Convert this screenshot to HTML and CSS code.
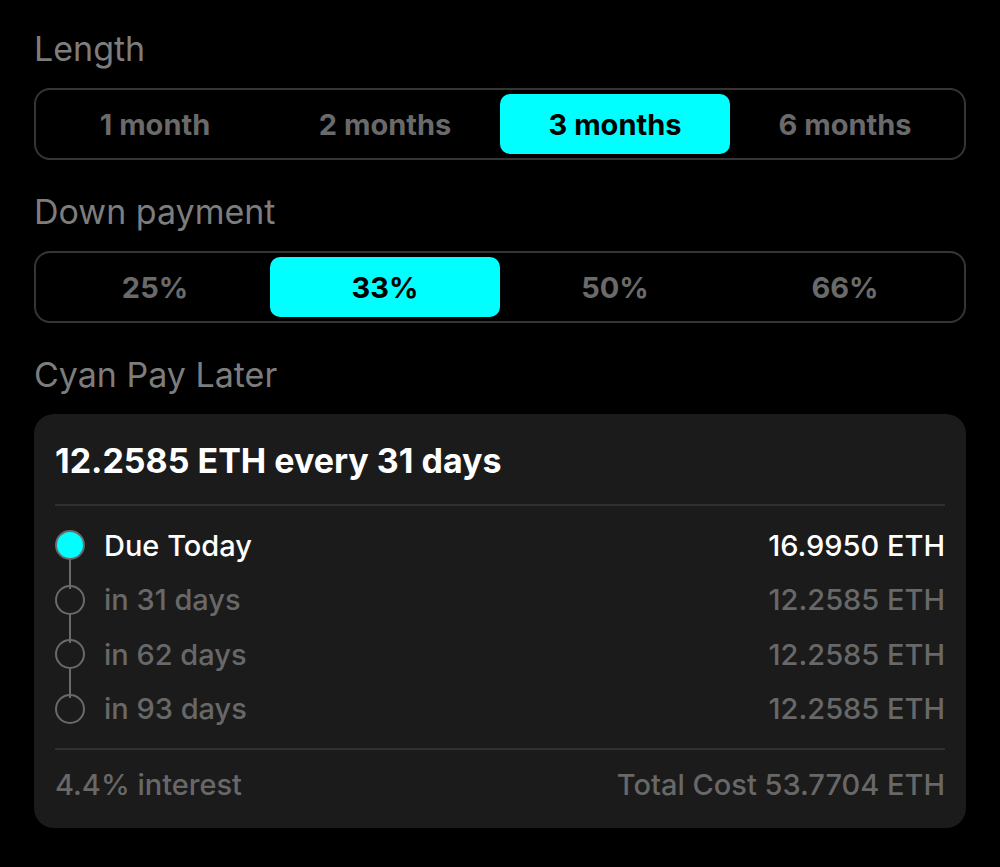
FILE: index.html
```html
<!DOCTYPE html>
<html>
<head>
<meta charset="utf-8">
<link rel="stylesheet" href="styles.css">
</head>
<body>
<div class="panel">
  <div class="label">Length</div>
  <div class="seg">
    <div class="opt">1 month</div>
    <div class="opt">2 months</div>
    <div class="opt active">3 months</div>
    <div class="opt">6 months</div>
  </div>
  <div class="label spaced">Down payment</div>
  <div class="seg">
    <div class="opt">25%</div>
    <div class="opt active">33%</div>
    <div class="opt">50%</div>
    <div class="opt">66%</div>
  </div>
  <div class="label spaced">Cyan Pay Later</div>
  <div class="card">
    <div class="title">12.2585 ETH every 31 days</div>
    <div class="rule"></div>
    <div class="rows">
      <div class="row current">
        <div class="marker"><span class="dot"></span></div>
        <div class="when">Due Today</div>
        <div class="amt">16.9950 ETH</div>
      </div>
      <div class="row">
        <div class="marker"><span class="dot"></span></div>
        <div class="when">in 31 days</div>
        <div class="amt">12.2585 ETH</div>
      </div>
      <div class="row">
        <div class="marker"><span class="dot"></span></div>
        <div class="when">in 62 days</div>
        <div class="amt">12.2585 ETH</div>
      </div>
      <div class="row last">
        <div class="marker"><span class="dot"></span></div>
        <div class="when">in 93 days</div>
        <div class="amt">12.2585 ETH</div>
      </div>
    </div>
    <div class="rule rule2"></div>
    <div class="foot">
      <div>4.4% interest</div>
      <div>Total Cost 53.7704 ETH</div>
    </div>
  </div>
</div>
</body>
</html>
```
FILE: styles.css
```css
* { box-sizing: border-box; }
html, body {
  margin: 0;
  background: #000;
}
body {
  font-family: Inter, "Noto Sans", "Liberation Sans", sans-serif;
  color: #fff;
}
.panel {
  width: 932px;
  margin-left: 34px;
  padding-top: 29px;
}
.label {
  font-size: 34px;
  line-height: 40px;
  font-weight: 400;
  color: #7d7d7d;
  margin-bottom: 19px;
}
.label.spaced { margin-top: 32px; }
.seg {
  display: grid;
  grid-template-columns: repeat(4, 1fr);
  border: 2px solid #353535;
  border-radius: 16px;
  padding: 4px;
  height: 72px;
}
.opt {
  display: flex;
  align-items: center;
  justify-content: center;
  font-size: 29px;
  font-weight: 700;
  color: #6a6a6a;
  border-radius: 10px;
}
.opt.active {
  background: #00ffff;
  color: #000;
}
.card {
  background: #1b1b1b;
  border-radius: 20px;
  padding: 27px 21px 23px 21px;
}
.title {
  font-size: 34px;
  line-height: 40px;
  font-weight: 700;
  color: #fff;
}
.rule {
  height: 2px;
  background: #303030;
  margin-top: 23px;
  margin-bottom: 12px;
}
.rule2 { margin-top: 12px; margin-bottom: 15px; }
.rows { display: flex; flex-direction: column; }
.row {
  display: flex;
  align-items: center;
  height: 54.5px;
  font-size: 29px;
  font-weight: 500;
  color: #686868;
}
.row.current { color: #fff; }
.marker {
  width: 49px;
  display: flex;
  align-items: center;
}
.dot {
  position: relative;
  display: block;
  width: 30px;
  height: 30px;
  border: 2px solid #6a6a6a;
  border-radius: 50%;
}
.row.current .dot { background: #00ffff; }
.dot::after {
  content: "";
  position: absolute;
  left: 12px;
  top: 28px;
  width: 2px;
  height: 28.5px;
  background: #6a6a6a;
}
.row.last .dot::after { display: none; }
.when { flex: 1; }
.amt { text-align: right; }
.foot {
  display: flex;
  justify-content: space-between;
  font-size: 29px;
  line-height: 40px;
  font-weight: 500;
  color: #686868;
}
```
